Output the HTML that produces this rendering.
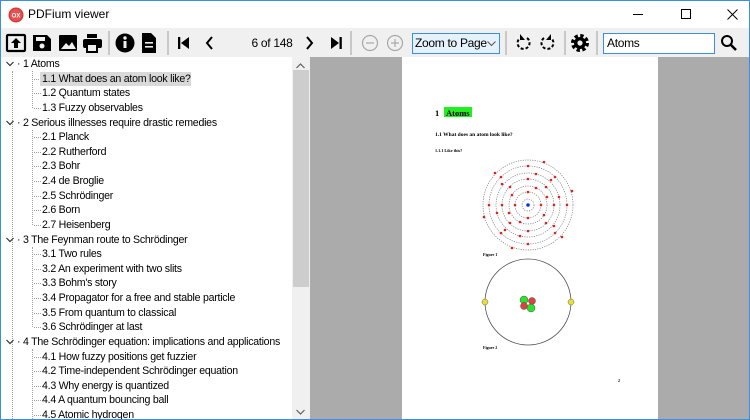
<!DOCTYPE html>
<html><head><meta charset="utf-8"><style>
*{margin:0;padding:0;box-sizing:border-box}
body{width:750px;height:420px;overflow:hidden;background:#fff;font-family:"Liberation Sans",sans-serif;position:relative;color:#000}
.abs{position:absolute}
#win{position:absolute;left:0;top:0;width:750px;height:420px;border:1px solid #3c8ee0}
#title{left:1px;top:1px;width:748px;height:27px;background:#fff}
#tb{left:1px;top:28px;width:748px;height:29px;background:#f0f0f0}
.sep{position:absolute;top:31px;width:2px;height:24px;background:#c8c8c8}
#tree{left:1px;top:57px;width:291px;height:362px;background:#fff}
.row{position:absolute;height:14px;line-height:14px;white-space:nowrap}
#sb{left:292px;top:57px;width:18px;height:362px;background:#f0f0f0}
#gray{left:310px;top:57px;width:439px;height:362px;background:#ababab}
#page{left:402px;top:57px;width:256px;height:362px;background:#fff}
.vd{position:absolute;width:0;border-left:1px dotted #a0a0a0}
.hd{position:absolute;height:0;width:7px;border-top:1px dotted #a0a0a0}
</style></head><body>
<div id="title" class="abs">
 <svg class="abs" style="left:7px;top:6px" width="16" height="16"><circle cx="8" cy="8" r="7.5" fill="#d63a3a"/><circle cx="8" cy="8" r="6" fill="#e85050"/><text x="8" y="10.5" font-size="6" fill="#fff" text-anchor="middle" font-family="Liberation Sans" font-weight="bold">OX</text></svg>
 <div class="abs" style="left:27px;top:6px;font-size:12px">PDFium viewer</div>
 <div class="abs" style="left:632px;top:13px;width:10px;height:1px;background:#000"></div>
 <div class="abs" style="left:680px;top:8px;width:10px;height:10px;border:1px solid #000"></div>
 <svg class="abs" style="left:726px;top:8px" width="11" height="11"><path d="M0.5 0.5L10.5 10.5M10.5 0.5L0.5 10.5" stroke="#000" stroke-width="1"/></svg>
</div>
<div id="tb" class="abs"></div>
<svg class="abs" style="left:0;top:28px" width="750" height="29">
 <g fill="#000">
  <rect x="7" y="7" width="18" height="16" rx="1" fill="none" stroke="#000" stroke-width="2.2"/>
  <path d="M16 10l-5 5h3v5h4v-5h3z"/>
  <path d="M33 7h14l4 4v12h-18z"/><rect x="36" y="9" width="9" height="4" fill="#f0f0f0"/><circle cx="42" cy="18" r="2.5" fill="#f0f0f0"/>
  <rect x="59" y="7" width="18" height="16" rx="1"/><path d="M61 21l5-6 3 3 3-4 4 7z" fill="#f0f0f0"/>
  <rect x="87" y="6" width="10" height="4"/><rect x="83" y="11" width="19" height="9" rx="2"/><rect x="87" y="16" width="10" height="8" fill="#f0f0f0" stroke="#000" stroke-width="2"/>
  <circle cx="125" cy="15" r="9.5"/><rect x="123.5" y="13" width="3" height="7" fill="#f0f0f0"/><circle cx="125" cy="10" r="1.7" fill="#f0f0f0"/>
  <path d="M142 5h9l5 5v15h-14z"/><rect x="145" y="14" width="8" height="1.6" fill="#f0f0f0"/><rect x="145" y="18" width="8" height="1.6" fill="#f0f0f0"/>
  <rect x="178" y="9" width="2.3" height="12"/><path d="M189 9v12l-8-6z"/>
  <path d="M212 9l-5 6 5 6" fill="none" stroke="#000" stroke-width="2"/>
  <path d="M307 9l5 6-5 6" fill="none" stroke="#000" stroke-width="2"/>
  <path d="M331 9v12l8-6z"/><rect x="339.5" y="9" width="2.3" height="12"/>
  <circle cx="370" cy="15" r="7.5" fill="none" stroke="#a8a8a8" stroke-width="1.2"/><rect x="366" y="14.4" width="8" height="1.2" fill="#a8a8a8"/>
  <circle cx="395" cy="15" r="7.5" fill="none" stroke="#a8a8a8" stroke-width="1.2"/><rect x="391" y="14.4" width="8" height="1.2" fill="#a8a8a8"/><rect x="394.4" y="11" width="1.2" height="8" fill="#a8a8a8"/>
  <path d="M527 10a6 6 0 1 1-8 1" fill="none" stroke="#000" stroke-width="2" stroke-dasharray="3 2"/><path d="M520 6v6h5z"/>
  <path d="M544 10a6 6 0 1 0 8 1" fill="none" stroke="#000" stroke-width="2" stroke-dasharray="3 2"/><path d="M551 6v6h-5z"/>
  <circle cx="580" cy="15" r="7" fill="none" stroke="#000" stroke-width="4" stroke-dasharray="3.2 2.3"/><circle cx="580" cy="15" r="6"/><circle cx="580" cy="15" r="2.6" fill="#f0f0f0"/>
  <circle cx="727" cy="13" r="5" fill="none" stroke="#000" stroke-width="2"/><path d="M730.5 16.5l5.5 5.5" stroke="#000" stroke-width="2.6"/>
 </g>
 <text x="272" y="19" font-size="12" text-anchor="middle" font-family="Liberation Sans" letter-spacing="-0.3">6 of 148</text>
</svg>
<div class="sep" style="left:108px"></div><div class="sep" style="left:167px"></div><div class="sep" style="left:350px"></div><div class="sep" style="left:505px"></div><div class="sep" style="left:564px"></div><div class="sep" style="left:596px"></div>
<div class="abs" style="left:412px;top:33px;width:88px;height:21px;border:1px solid #3c8ee0;background:#e5f1fb;font-size:12px;line-height:19px;padding-left:2px;letter-spacing:-0.3px">Zoom to Page<svg class="abs" style="left:74px;top:7px" width="9" height="6"><path d="M0.5 0.5l4 4 4-4" fill="none" stroke="#555"/></svg></div>
<div class="abs" style="left:603px;top:33px;width:112px;height:21px;border:1px solid #3c8ee0;background:#fff;font-size:12px;line-height:19px;padding-left:3px;letter-spacing:-0.3px">Atoms</div>

<div id="tree" class="abs">
<div class="vd" style="left:11px;top:14px;height:348px"></div>
<div class="vd" style="left:31px;top:14px;height:37px"></div>
<div class="vd" style="left:31px;top:73px;height:95px"></div>
<div class="vd" style="left:31px;top:190px;height:80px"></div>
<div class="vd" style="left:31px;top:292px;height:70px"></div>
</div>
<div id="rows"></div>
<div id="sb" class="abs">
 <svg class="abs" style="left:4px;top:6px" width="9" height="6"><path d="M0.5 5l4-4 4 4" fill="none" stroke="#606060" stroke-width="1.2"/></svg>
 <div class="abs" style="left:1px;top:13px;width:16px;height:217px;background:#cdcdcd"></div>
 <svg class="abs" style="left:4px;top:352px" width="9" height="6"><path d="M0.5 1l4 4 4-4" fill="none" stroke="#606060" stroke-width="1.2"/></svg>
</div>
<div id="gray" class="abs"></div>
<div id="page" class="abs"></div>
<svg class="abs" style="left:402px;top:57px" width="256" height="362" font-family="Liberation Serif" font-weight="bold">
 <rect x="42" y="50" width="28" height="10" fill="#22ee22"/>
 <text x="33" y="59" font-size="8.5">1</text><text x="44" y="59" font-size="8.5">Atoms</text>
 <text x="33" y="79" font-size="5.5">1.1  What does an atom look like?</text>
 <text x="33" y="95" font-size="4.2">1.1.1  Like this?</text>
 <g fill="none" stroke="#777" stroke-width="0.7" stroke-dasharray="1.2 1.2">
  <circle cx="126" cy="148" r="6"/><circle cx="126" cy="148" r="13"/><circle cx="126" cy="148" r="19"/><circle cx="126" cy="148" r="26"/><circle cx="126" cy="148" r="32"/><circle cx="126" cy="148" r="39"/><circle cx="126" cy="148" r="45"/>
 </g>
 <g fill="#e02020">
  <circle cx="139" cy="148" r="1.3"/><circle cx="113" cy="148" r="1.3"/><circle cx="126" cy="135" r="1.3"/><circle cx="126" cy="161" r="1.3"/>
  <circle cx="145" cy="140" r="1.3"/><circle cx="107" cy="156" r="1.3"/><circle cx="134" cy="131" r="1.3"/><circle cx="118" cy="165" r="1.3"/><circle cx="110" cy="138" r="1.3"/><circle cx="142" cy="158" r="1.3"/>
  <circle cx="152" cy="148" r="1.3"/><circle cx="100" cy="148" r="1.3"/><circle cx="126" cy="122" r="1.3"/><circle cx="126" cy="174" r="1.3"/><circle cx="144" cy="130" r="1.3"/><circle cx="108" cy="166" r="1.3"/><circle cx="108" cy="130" r="1.3"/><circle cx="144" cy="166" r="1.3"/>
  <circle cx="157" cy="140" r="1.3"/><circle cx="95" cy="156" r="1.3"/><circle cx="134" cy="117" r="1.3"/><circle cx="118" cy="179" r="1.3"/><circle cx="100" cy="127" r="1.3"/><circle cx="152" cy="169" r="1.3"/><circle cx="149" cy="123" r="1.3"/><circle cx="103" cy="173" r="1.3"/>
  <circle cx="165" cy="148" r="1.3"/><circle cx="87" cy="148" r="1.3"/><circle cx="126" cy="109" r="1.3"/><circle cx="126" cy="187" r="1.3"/><circle cx="153" cy="120" r="1.3"/><circle cx="99" cy="176" r="1.3"/><circle cx="99" cy="120" r="1.3"/><circle cx="153" cy="176" r="1.3"/>
  <circle cx="170" cy="134" r="1.3"/><circle cx="82" cy="160" r="1.3"/><circle cx="142" cy="105" r="1.3"/><circle cx="110" cy="191" r="1.3"/><circle cx="93" cy="116" r="1.3"/><circle cx="160" cy="180" r="1.3"/>
 </g>
 <circle cx="126" cy="148" r="1.8" fill="#1030e0"/>
 <text x="81" y="199" font-size="4">Figure 1</text>
 <circle cx="126" cy="245" r="43" fill="none" stroke="#555" stroke-width="0.8"/>
 <circle cx="83" cy="245" r="3" fill="#e8e030" stroke="#666" stroke-width="0.5"/><circle cx="169" cy="245" r="3" fill="#e8e030" stroke="#666" stroke-width="0.5"/>
 <circle cx="122" cy="243" r="4" fill="#30e030" stroke="#333" stroke-width="0.4"/><circle cx="130" cy="244" r="3.5" fill="#e04040" stroke="#333" stroke-width="0.4"/><circle cx="122" cy="249" r="3.5" fill="#e04040" stroke="#333" stroke-width="0.4"/><circle cx="129" cy="251" r="4" fill="#30e030" stroke="#333" stroke-width="0.4"/>
 <text x="81" y="292" font-size="4">Figure 2</text>
 <text x="216" y="325" font-size="4">2</text>
</svg>
<div id="win"></div>
<script>
var rows=[
[0,"1 Atoms"],[1,"1.1 What does an atom look like?"],[1,"1.2 Quantum states"],[1,"1.3 Fuzzy observables"],
[0,"2 Serious illnesses require drastic remedies"],[1,"2.1 Planck"],[1,"2.2 Rutherford"],[1,"2.3 Bohr"],[1,"2.4 de Broglie"],[1,"2.5 Schrödinger"],[1,"2.6 Born"],[1,"2.7 Heisenberg"],
[0,"3 The Feynman route to Schrödinger"],[1,"3.1 Two rules"],[1,"3.2 An experiment with two slits"],[1,"3.3 Bohm's story"],[1,"3.4 Propagator for a free and stable particle"],[1,"3.5 From quantum to classical"],[1,"3.6 Schrödinger at last"],
[0,"4 The Schrödinger equation: implications and applications"],[1,"4.1 How fuzzy positions get fuzzier"],[1,"4.2 Time-independent Schrödinger equation"],[1,"4.3 Why energy is quantized"],[1,"4.4 A quantum bouncing ball"],[1,"4.5 Atomic hydrogen"]];
var h='';
rows.forEach(function(r,i){var t=Math.round(57+i*14.63);
if(r[0]==0){h+='<svg style="position:absolute;left:5px;top:'+(t+4)+'px" width="8" height="6"><path d="M0.5 1l3.5 3.5 3.5-3.5" fill="none" stroke="#333" stroke-width="1.2"/></svg><div class="row" style="left:16px;top:'+t+'px">· '+r[1]+'</div>';}
else{h+='<div class="hd" style="left:33px;top:'+(t+7)+'px"></div><div class="row" style="left:39px;top:'+t+'px;padding:0 2px;'+(i==1?'background:#d9d9d9;width:151px;':'')+'">'+r[1]+'</div>';}
});
var el=document.getElementById('rows');
el.innerHTML=h;
el.style.cssText='position:absolute;left:1px;top:0;font-size:10.6px;letter-spacing:-0.25px;width:291px;height:419px;overflow:hidden';
</script>
</body></html>
